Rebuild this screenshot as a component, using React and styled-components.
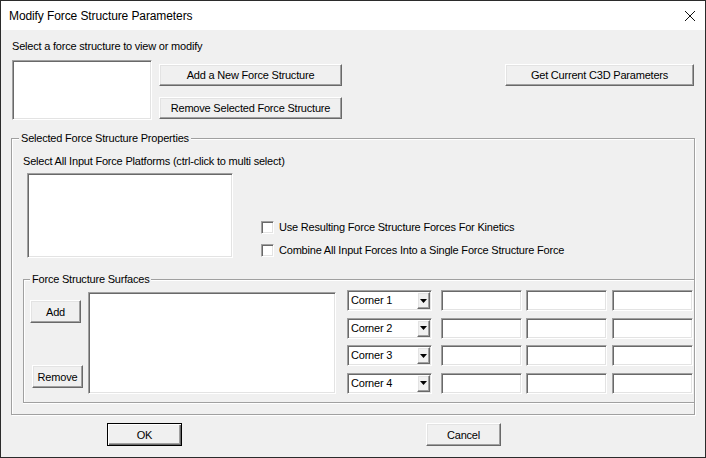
import React from "react";
import styled, { createGlobalStyle } from "styled-components";

const GlobalStyle = createGlobalStyle`
  html, body {
    margin: 0;
    padding: 0;
    background: #ffffff;
  }
  body {
    font-family: "Liberation Sans", Arial, sans-serif;
    font-size: 11px;
    letter-spacing: -0.2px;
    color: #000;
  }
`;

const Window = styled.div`
  width: 706px;
  height: 458px;
  box-sizing: border-box;
  border: 1px solid #2b2b2b;
  display: flex;
  flex-direction: column;
  background: #f0f0f0;
`;

const TitleBar = styled.div`
  height: 29px;
  flex: none;
  background: #ffffff;
  display: flex;
  align-items: center;
  justify-content: space-between;
  padding: 0 10px 0 8px;
  font-family: "Liberation Sans", Arial, sans-serif;
  font-size: 12px;
  letter-spacing: -0.1px;
`;

const Body = styled.div`
  flex: 1;
  padding: 10px 10px 0 10px;
  display: flex;
  flex-direction: column;
`;

const Label = styled.div`
  line-height: 13px;
  white-space: nowrap;
  margin-left: ${(p) => p.$indent || 0}px;
`;

const Row = styled.div`
  display: flex;
  align-items: ${(p) => p.$align || "flex-start"};
  margin-top: ${(p) => p.$top || 0}px;
`;

const Column = styled.div`
  display: flex;
  flex-direction: column;
  gap: ${(p) => p.$gap || 0}px;
  margin-left: ${(p) => p.$left || 0}px;
  padding-top: ${(p) => p.$top || 0}px;
  padding-bottom: ${(p) => p.$bottom || 0}px;
  width: ${(p) => (p.$width ? `${p.$width}px` : "auto")};
`;

const Spacer = styled.div`
  flex: 1;
`;

const Sunken = styled.div`
  box-sizing: border-box;
  background: #ffffff;
  border: 1px solid;
  border-color: #a0a0a0 #ffffff #ffffff #a0a0a0;
  box-shadow: inset 1px 1px 0 #696969, inset -1px -1px 0 #e3e3e3;
`;

const ListBox = styled(Sunken)`
  width: ${(p) => p.$w}px;
  height: ${(p) => p.$h}px;
  margin-left: ${(p) => p.$left || 0}px;
  margin-top: ${(p) => p.$top || 0}px;
  flex: none;
`;

const Button = styled.button`
  box-sizing: border-box;
  width: ${(p) => p.$w}px;
  height: ${(p) => p.$h || 22}px;
  margin: 0;
  margin-left: ${(p) => p.$left || 0}px;
  margin-top: ${(p) => p.$top || 0}px;
  margin-right: ${(p) => p.$right || 0}px;
  padding: 0;
  font-family: "Liberation Sans", Arial, sans-serif;
  font-size: 11px;
  letter-spacing: -0.2px;
  color: #000;
  background: #f0f0f0;
  border: 1px solid;
  border-color: #ffffff #696969 #696969 #ffffff;
  box-shadow: inset -1px -1px 0 #a0a0a0, inset 1px 1px 0 #e3e3e3;
  flex: none;
`;

const DefaultButton = styled(Button)`
  border: 1px solid #000;
  box-shadow: inset 1px 1px 0 #ffffff, inset -1px -1px 0 #696969,
    inset -2px -2px 0 #a0a0a0;
`;

const Group = styled.fieldset`
  margin: ${(p) => p.$top || 0}px 0 0 0;
  padding: ${(p) => p.$pad};
  border: 1px solid #a0a0a0;
  box-shadow: inset 1px 1px 0 #ffffff, 1px 1px 0 #ffffff;
  min-width: 0;
`;

const InnerGroup = styled(Group)`
  border-right: none;
  box-shadow: inset 1px 1px 0 #ffffff, 0 1px 0 #ffffff;
`;

const GroupTitle = styled.legend`
  padding: 0 2px;
  margin-left: ${(p) => p.$offset || 0}px;
  background: #f0f0f0;
  line-height: 13px;
  white-space: nowrap;
`;

const CheckRow = styled.label`
  display: flex;
  align-items: center;
  gap: 5px;
  line-height: 13px;
  white-space: nowrap;
`;

const CheckBox = styled(Sunken)`
  width: 13px;
  height: 13px;
  flex: none;
`;

const CornerTable = styled.div`
  display: flex;
  flex-direction: column;
  gap: 6.67px;
  margin-left: 11px;
`;

const CornerRow = styled.div`
  display: flex;
  gap: 4.5px;
`;

const Combo = styled(Sunken)`
  width: 85px;
  height: 21px;
  padding: 1px;
  display: flex;
  align-items: center;
  margin-right: 4px;
`;

const ComboText = styled.span`
  flex: 1;
  padding-left: 2px;
  line-height: 13px;
`;

const ComboArrow = styled.div`
  box-sizing: border-box;
  width: 13px;
  height: 17px;
  background: #f0f0f0;
  border: 1px solid;
  border-color: #ffffff #696969 #696969 #ffffff;
  box-shadow: inset -1px -1px 0 #a0a0a0, inset 1px 1px 0 #e3e3e3;
  display: flex;
  align-items: center;
  justify-content: center;
`;

const EditBox = styled(Sunken)`
  width: 81px;
  height: 21px;
`;

const BottomBar = styled.div`
  display: flex;
  margin-top: 8px;
  padding-left: 96px;
`;

const CloseIcon = () => (
  <svg width="10" height="10" viewBox="0 0 10 10">
    <path d="M0 0 L10 10 M10 0 L0 10" stroke="#111" strokeWidth="1" />
  </svg>
);

const corners = ["Corner 1", "Corner 2", "Corner 3", "Corner 4"];

const App = () => {
  return (
    <>
      <GlobalStyle />
      <Window>
        <TitleBar>
          <span>Modify Force Structure Parameters</span>
          <CloseIcon />
        </TitleBar>

        <Body>
          <Label $indent={1}>Select a force structure to view or modify</Label>

          {/* Force structure list and actions */}
          <Row $top={7}>
            <ListBox $w={140} $h={60} $left={1} />
            <Column $left={7} $top={4} $gap={11}>
              <Button $w={183}>Add a New Force Structure</Button>
              <Button $w={183}>Remove Selected Force Structure</Button>
            </Column>
            <Spacer />
            <Button $w={189} $top={4} $right={1}>
              Get Current C3D Parameters
            </Button>
          </Row>

          {/* Selected structure properties */}
          <Group $top={12} $pad="10px 0 11px 11px">
            <GroupTitle $offset={-4}>Selected Force Structure Properties</GroupTitle>
            <Label>Select All Input Force Platforms (ctrl-click to multi select)</Label>
            <Row $top={5} $align="flex-end">
              <ListBox $w={206} $h={85} $left={4} />
              <Column $left={28} $gap={10} $bottom={1}>
                <CheckRow>
                  <CheckBox />
                  Use Resulting Force Structure Forces For Kinetics
                </CheckRow>
                <CheckRow>
                  <CheckBox />
                  Combine All Input Forces Into a Single Force Structure Force
                </CheckRow>
              </Column>
            </Row>

            <InnerGroup $top={15} $pad="4px 0 8px 6px">
              <GroupTitle $offset={0}>Force Structure Surfaces</GroupTitle>
              <Row>
                <Column $width={53}>
                  <Button $w={51} $h={23} $top={10}>
                    Add
                  </Button>
                  <Button $w={51} $h={23} $top={42} $left={2}>
                    Remove
                  </Button>
                </Column>
                <ListBox $w={248} $h={102} $left={5} $top={2} />
                <CornerTable>
                  {corners.map((name) => (
                    <CornerRow key={name}>
                      <Combo>
                        <ComboText>{name}</ComboText>
                        <ComboArrow>
                          <svg width="7" height="4" viewBox="0 0 7 4">
                            <path d="M0 0 H7 L3.5 4 Z" fill="#000" />
                          </svg>
                        </ComboArrow>
                      </Combo>
                      <EditBox />
                      <EditBox />
                      <EditBox />
                    </CornerRow>
                  ))}
                </CornerTable>
              </Row>
            </InnerGroup>
          </Group>

          <BottomBar>
            <DefaultButton $w={75} $h={23}>
              OK
            </DefaultButton>
            <Button $w={75} $h={23} $left={244}>
              Cancel
            </Button>
          </BottomBar>
        </Body>
      </Window>
    </>
  );
};

export default App;
